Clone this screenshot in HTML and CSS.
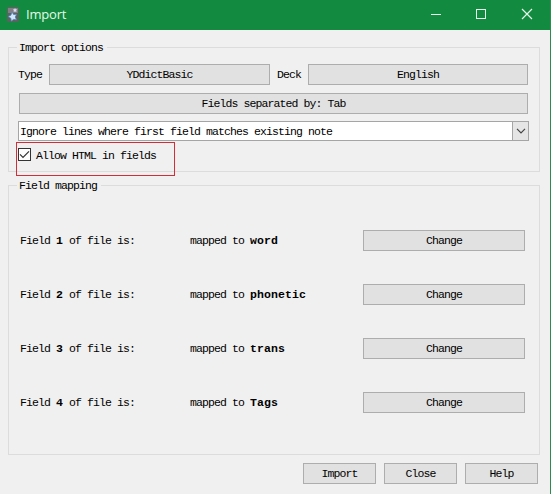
FILE: index.html
```html
<!DOCTYPE html>
<html lang="en">
<head>
<meta charset="utf-8">
<title>Import</title>
<link rel="stylesheet" href="styles.css">
</head>
<body>
<div class="window">
  <header class="titlebar">
    <svg class="app-icon" width="12" height="15" viewBox="0 0 12 15">
      <rect width="12" height="15" rx="1.5" fill="#59645f"/>
      <rect x="1" y="1" width="10" height="5" fill="#817f85"/>
      <path d="M5 5l1.6 2.5 3-.2-1.3 2.7 1.2 2.8-3-.4-2.2 1.8-.5-3L1 9.5l2.8-1.2z" fill="#d3e8fb" stroke="#507eb5" stroke-width=".8"/>
      <path d="M8 1l.7 1.3 1.5.1-1 1.2.3 1.4-1.5-.6-1.3.6.1-1.5-.9-1.1 1.5-.2z" fill="#d7e3f3"/>
    </svg>
    <h1 class="title">Import</h1>
    <svg class="controls" width="106" height="12" viewBox="0 0 106 12" fill="none" stroke="#e4fbe9">
      <path d="M0 6.5h10"/>
      <rect x="45.500" y="1.500" width="9" height="9"/>
      <path d="M91 1l10 10M101 1L91 11" stroke-width="1.200"/>
    </svg>
  </header>
  <main class="content">
    <section class="group options">
      <h2 class="legend">Import options</h2>
      <div class="pickers">
        <span class="label">Type</span>
        <button class="btn type">YDdictBasic</button>
        <span class="label deck-label">Deck</span>
        <button class="btn deck">English</button>
      </div>
      <button class="btn separator">Fields separated by: Tab</button>
      <div class="combo">
        <span class="combo-text">Ignore lines where first field matches existing note</span>
        <span class="combo-arrow"><svg width="10" height="6" viewBox="0 0 10 6" fill="none" stroke="#444" stroke-width="1.200"><path d="M1 .8l4 4 4-4"/></svg></span>
      </div>
      <label class="check">
        <svg width="13" height="13" viewBox="0 0 13 13" fill="none" stroke="#333"><rect x=".5" y=".5" width="12" height="12" fill="#fff"/><path d="M2 6.300l3 3L11 3.300" stroke-width="1.200"/></svg>
        <span>Allow HTML in fields</span>
      </label>
    </section>
    <section class="group mapping">
      <h2 class="legend">Field mapping</h2>
      <div class="row"><span class="field">Field <b>1</b> of file is:</span><span class="target">mapped to <b>word</b></span><button class="btn change">Change</button></div>
      <div class="row"><span class="field">Field <b>2</b> of file is:</span><span class="target">mapped to <b>phonetic</b></span><button class="btn change">Change</button></div>
      <div class="row"><span class="field">Field <b>3</b> of file is:</span><span class="target">mapped to <b>trans</b></span><button class="btn change">Change</button></div>
      <div class="row"><span class="field">Field <b>4</b> of file is:</span><span class="target">mapped to <b>Tags</b></span><button class="btn change">Change</button></div>
    </section>
    <footer class="actions">
      <button class="btn action">Import</button>
      <button class="btn action">Close</button>
      <button class="btn action">Help</button>
    </footer>
  </main>
</div>
</body>
</html>
```
FILE: styles.css
```css
* { box-sizing: border-box; }
body {
  margin: 0;
  overflow: hidden;
  background: #f0f0f0;
  color: #000;
  font: 11.5px/14px "Liberation Mono", monospace;
  letter-spacing: -0.9px;
}
.window {
  height: 494px;
  border-right: 1px solid #2b8c50;
}
.titlebar {
  display: flex;
  align-items: center;
  height: 30px;
  padding: 0 13px 2px 7px;
  background: #128a3f;
  letter-spacing: 0;
}
.title {
  flex: 1;
  margin: 0 0 0 7px;
  color: #e2fce7;
  font: 13px/18px "Open Sans", sans-serif;
  letter-spacing: -0.2px;
}
.controls { display: block; }
.content { padding: 17px 10px 0 8px; }
.group {
  width: 532px;
  border: 1px solid #dcdcdc;
}
.options { height: 125px; padding: 0 9px; }
.mapping { height: 270px; margin-top: 13px; padding: 0 9px; }
.legend {
  width: fit-content;
  height: 14px;
  margin: -7px 0 0 -1px;
  padding: 0 4px 0 2px;
  background: #f0f0f0;
  font: inherit;
}
.btn {
  display: flex;
  align-items: center;
  justify-content: center;
  height: 21px;
  margin: 0;
  padding: 0;
  border: 1px solid #adadad;
  border-radius: 0;
  background: #e1e1e1;
  color: #000;
  font: inherit;
  letter-spacing: inherit;
}
.pickers { display: flex; align-items: center; margin-top: 9px; }
.label { width: 31px; }
.type { width: 221px; }
.deck-label { margin-left: 7px; }
.deck { width: 220px; }
.separator { width: 509px; margin: 8px 0 0 1px; }
.combo {
  display: flex;
  justify-content: space-between;
  width: 511px;
  height: 20px;
  margin-top: 7px;
  border: 1px solid #a5a5a5;
  background: #fff;
}
.combo-text { padding: 3px 0 0 1px; }
.combo-arrow {
  display: flex;
  align-items: center;
  justify-content: center;
  width: 17px;
  margin: -1px;
  border: 1px solid #a5a5a5;
  background: #e5e5e5;
}
.check {
  display: flex;
  gap: 5px;
  width: 159px;
  height: 34px;
  margin: 1px 0 0 -2px;
  padding: 5px 0 0 1px;
  border: 1px solid #cf2f38;
}
.check span { padding-top: 1px; height: 15px; }
.mapping .legend { margin-bottom: 37px; }
.row { display: flex; align-items: flex-start; height: 21px; margin-bottom: 33px; padding-left: 2px; }
.field { width: 170px; padding-top: 4px; }
.target { width: 173px; padding-top: 4px; }
.row b { letter-spacing: 0.1px; }
.change { width: 162px; }
.actions { display: flex; justify-content: flex-end; gap: 8px; margin-top: 8px; padding-right: 2px; }
.action { width: 73px; }
```
